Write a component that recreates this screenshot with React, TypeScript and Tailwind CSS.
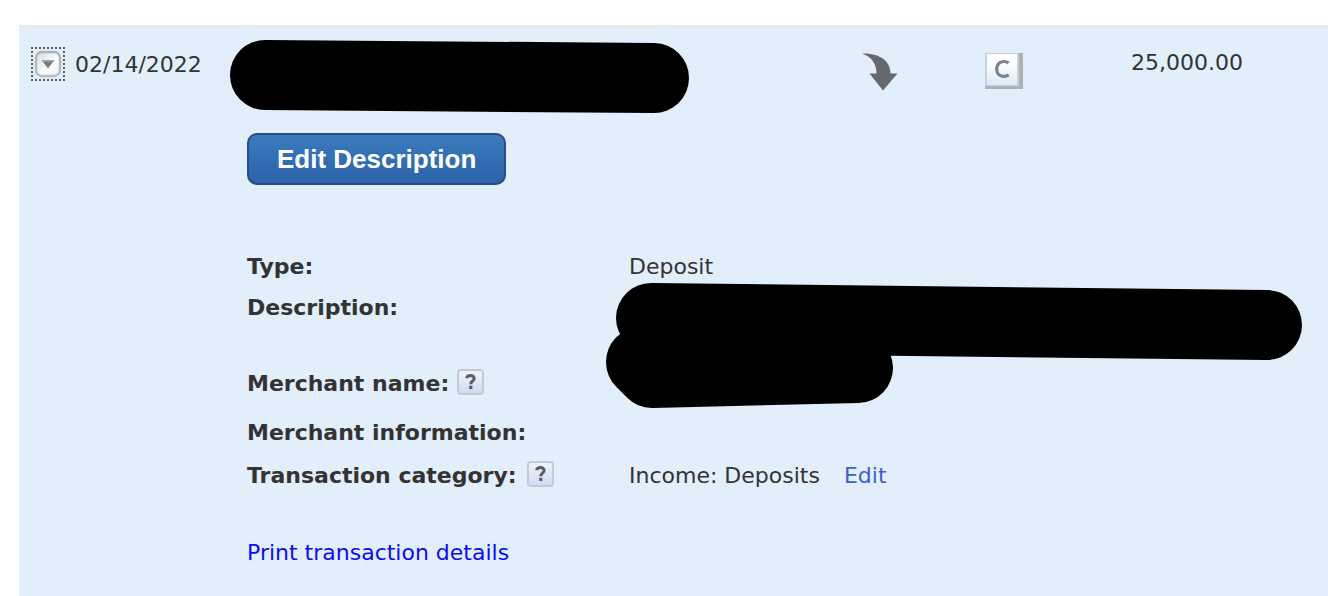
import React from "react";

function HelpButton({ label }: { label: string }) {
  return (
    <button
      type="button"
      aria-label={label}
      className="flex h-[26px] w-[27px] items-center justify-center rounded-[4px] border-2 border-[#c3cad3] bg-linear-to-b from-[#eff3f8] to-[#d0dcf6]"
    >
      <svg width="11" height="16" viewBox="0 0 11 16" aria-hidden="true">
        <path
          d="M1.5 4.2C2 2.2 3.5 1.5 5.4 1.5C7.7 1.5 9.2 2.7 9.2 4.5C9.2 6.9 5.8 7 5.8 10.2"
          fill="none"
          stroke="#5a5e64"
          strokeWidth="3"
        />
        <rect x="4.2" y="11.8" width="3.2" height="3.2" fill="#5a5e64" />
      </svg>
    </button>
  );
}

function ToggleButton() {
  return (
    <button
      type="button"
      aria-label="Collapse transaction"
      aria-expanded="true"
      className="h-[34px] w-[34px] shrink-0"
    >
      <svg width="34" height="34" viewBox="0 0 34 34" aria-hidden="true">
        <defs>
          <linearGradient id="toggle-edge" x1="0" y1="0" x2="0" y2="1">
            <stop offset="0" stopColor="#adb4bc" />
            <stop offset="1" stopColor="#b9bec5" />
          </linearGradient>
          <linearGradient id="toggle-face" x1="0" y1="0" x2="1" y2="1">
            <stop offset="0" stopColor="#d3dae3" />
            <stop offset="0.6" stopColor="#fbfcfd" />
            <stop offset="1" stopColor="#eef0f3" />
          </linearGradient>
        </defs>
        <path
          d="M0 1H34M0 33H34M1 4V32M33 4V32"
          fill="none"
          stroke="#5d6064"
          strokeWidth="2"
          strokeDasharray="2 2"
        />
        <rect x="5" y="5" width="24" height="24" rx="6" fill="url(#toggle-face)" stroke="url(#toggle-edge)" strokeWidth="2.4" />
        <path d="M11 13.5H23L18.5 19.5L17 21.5L15.5 19.5Z" fill="#767a80" />
        <path d="M11 13.5H23V15H12Z" fill="#92979e" />
      </svg>
    </button>
  );
}

function DepositArrow() {
  return (
    <svg width="37" height="38" viewBox="0 0 37 38" role="img" aria-label="Deposit">
      <path
        d="M0 0.5C15 0 28.5 6 28.5 20.5H35.5L21 37.5L7.5 20.5H14.5C14.5 11 10 4 0 0.5Z"
        fill="#66696c"
      />
    </svg>
  );
}

function ClearedBadge() {
  return (
    <svg width="38" height="36" viewBox="0 0 38 36" role="img" aria-label="Cleared">
      <defs>
        <linearGradient id="cleared-face" x1="0" y1="0" x2="0" y2="1">
          <stop offset="0" stopColor="#ffffff" />
          <stop offset="0.4" stopColor="#fafcff" />
          <stop offset="1" stopColor="#dbe9f8" />
        </linearGradient>
      </defs>
      <rect width="38" height="36" fill="#adb2b8" />
      <rect width="34" height="33" fill="#cbd0d6" />
      <rect x="2" y="1" width="30" height="31" fill="url(#cleared-face)" />
      <path
        d="M23.5 10C22 8.7 20.5 8.5 18.8 8.5C14.5 8.5 11.7 11.5 11.7 16C11.7 20.7 14.5 23.4 18.8 23.4C20.7 23.4 22.3 23 23.7 21.8"
        fill="none"
        stroke="#7c8187"
        strokeWidth="3.2"
      />
    </svg>
  );
}

export default function App() {
  return (
    <main className="flex min-h-screen flex-col bg-white pt-[25px] pl-[19px] font-['DejaVu_Sans',Verdana,sans-serif] text-[22px] leading-[30px] text-[#333333]">
      <section className="grow border-t-2 border-[#e9e9e9] bg-[#e2eefa] pt-[13px] pb-7">
        <div className="grid grid-cols-[199px_1fr_123px_144px_114px] items-start pr-[85px] pl-3">
          <div className="flex items-start gap-[10px] pt-[7px]">
            <ToggleButton />
            <time dateTime="2022-02-14" className="pt-[3px]">
              02/14/2022
            </time>
          </div>
          <svg width="460" height="73" viewBox="0 0 460 73" role="img" aria-label="Hidden description">
            <path d="M35 35L424 38" stroke="#000000" strokeWidth="70" strokeLinecap="round" />
          </svg>
          <div className="pt-[13px]">
            <DepositArrow />
          </div>
          <div className="pt-[13px]">
            <ClearedBadge />
          </div>
          <div className="pt-2 text-right">25,000.00</div>
        </div>

        <div className="pt-5 pl-[228px]">
          <button
            type="button"
            className="flex h-[52px] items-center rounded-[10px] border-2 border-[#264d8a] bg-linear-to-b from-[#397bbd] to-[#2c62a8] px-7 font-['Liberation_Sans',Arial,sans-serif] text-[26px] font-bold text-white"
          >
            Edit Description
          </button>

          <dl className="grid grid-cols-[382px_1fr] grid-rows-[41px_76px_49px_43px_30px] pt-[67px] [&>dt]:font-bold">
            <dt>Type:</dt>
            <dd>Deposit</dd>
            <dt>Description:</dt>
            <dd className="relative">
              <svg
                className="absolute -top-[11px] -left-6"
                width="698"
                height="127"
                viewBox="605 282 698 127"
                role="img"
                aria-label="Hidden details"
              >
                <g fill="none" stroke="#000000" strokeWidth="70" strokeLinecap="round" strokeLinejoin="round">
                  <path d="M651 318L1267 325" />
                  <path d="M641 362L652 373L858 368" />
                </g>
              </svg>
            </dd>
            <dt className="flex items-start gap-2">
              Merchant name: <HelpButton label="Help with merchant name" />
            </dt>
            <dd />
            <dt>Merchant information:</dt>
            <dd />
            <dt className="flex items-start gap-[10px]">
              Transaction category: <HelpButton label="Help with transaction category" />
            </dt>
            <dd className="flex gap-6">
              Income: Deposits
              <a href="#edit" className="text-[#3e62c9]">
                Edit
              </a>
            </dd>
          </dl>

          <a href="#print" className="mt-[47px] inline-block text-[#0c0cf0]">
            Print transaction details
          </a>
        </div>
      </section>
    </main>
  );
}
